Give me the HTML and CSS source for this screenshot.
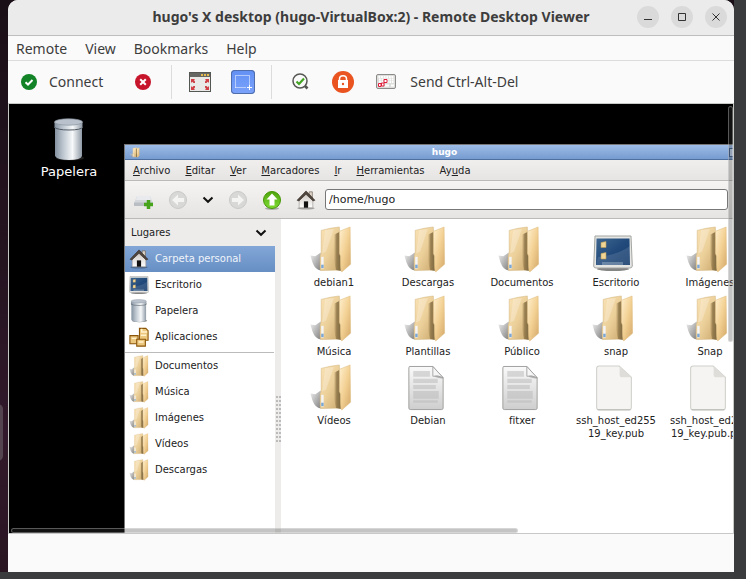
FILE: index.html
```html
<!DOCTYPE html>
<html lang="es">
<head>
<meta charset="utf-8">
<title>hugo's X desktop (hugo-VirtualBox:2) - Remote Desktop Viewer</title>
<link rel="stylesheet" href="styles.css">
</head>
<body>
<svg class="defs" aria-hidden="true">
  <defs>
    <linearGradient id="gFold" x1="0" y1="0" x2="1" y2="1"><stop offset="0" stop-color="#fbe3b6"/><stop offset=".5" stop-color="#ecd09a"/><stop offset="1" stop-color="#c9a76c"/></linearGradient>
    <linearGradient id="gFlap" x1="0" y1="0" x2="1" y2="1"><stop offset="0" stop-color="#fff0cf"/><stop offset=".5" stop-color="#f3d194"/><stop offset="1" stop-color="#d3a868"/></linearGradient>
    <linearGradient id="gGap" x1="0" y1="0" x2="1" y2="0"><stop offset="0" stop-color="#8f7543" stop-opacity="0"/><stop offset=".4" stop-color="#8a7145" stop-opacity=".8"/><stop offset="1" stop-color="#7d6941"/></linearGradient>
    <linearGradient id="gShade" x1="0" y1="0" x2="1" y2="1"><stop offset="0" stop-color="#eee"/><stop offset="1" stop-color="#6a6a6a"/></linearGradient>
    <linearGradient id="gCan" x1="0" y1="0" x2="1" y2="0"><stop offset="0" stop-color="#8491a0"/><stop offset=".25" stop-color="#b4bec9"/><stop offset=".65" stop-color="#f7f9fa"/><stop offset="1" stop-color="#8f9aa6"/></linearGradient>
    <linearGradient id="gBlue" x1="0" y1="0" x2="1" y2="1"><stop offset="0" stop-color="#3f668f"/><stop offset=".5" stop-color="#224b7c"/><stop offset="1" stop-color="#133a6b"/></linearGradient>
    <linearGradient id="gDoc" x1="0" y1="0" x2="0" y2="1"><stop offset="0" stop-color="#fafafa"/><stop offset="1" stop-color="#cecece"/></linearGradient>
    <linearGradient id="gGreen" x1="0" y1="0" x2="0" y2="1"><stop offset="0" stop-color="#4ea30d"/><stop offset="1" stop-color="#80dc33"/></linearGradient>
    <linearGradient id="gWall" x1="0" y1="0" x2="0" y2="1"><stop offset="0" stop-color="#c9c3bd"/><stop offset="1" stop-color="#fff"/></linearGradient>
  </defs>
  <symbol id="folder" viewBox="0 0 44 50">
    <path d="M1 31 6 32 11.500 28V46.500Q6 46 3 38Z" fill="url(#gShade)" opacity=".85"/>
    <path d="M12 5.500Q21 3 30.500 2L32 46 11.500 46.500Q10.500 46 11 31.500L12 28Z" fill="url(#gFold)" stroke="#d0b078" stroke-width=".5"/>
    <path d="M16 5 25 4 17 27 13 29Z" fill="#fff" opacity=".25"/>
    <path d="M25 10 31 7 32 47 27 46 25 36Z" fill="url(#gGap)"/>
    <path d="M30.500 6.500 41.500 2 42 40 33 48Q31.500 48 31.800 32L30.500 29Z" fill="url(#gFlap)" stroke="#dcb97c" stroke-width=".5"/>
    <path d="M12 32.500h2.500v12H12z" fill="#f5f5f5"/><path d="M12 40.500h2.500v3.500H12z" fill="#7da7d3"/>
  </symbol>
  <symbol id="trash" viewBox="0 0 32 44">
    <ellipse cx="17" cy="40" rx="14" ry="2.500" fill="#333" opacity=".6"/>
    <path d="M2 6V38Q4 42 16 42T29 38V6Z" fill="url(#gCan)"/>
    <path d="M1.500 4V10Q4 12.500 16 12.500T29.500 10V4Z" fill="url(#gCan)"/>
    <path d="M1 9Q4 12 16 12T30 9" fill="none" stroke="#515a64" stroke-width="1"/>
    <ellipse cx="15.500" cy="4" rx="14" ry="3.200" fill="#b9c2cc" stroke="#8995a1" stroke-width=".7"/>
  </symbol>
  <symbol id="desktop" viewBox="0 0 40 36">
    <ellipse cx="20" cy="34" rx="16" ry="2" fill="#333" opacity=".6"/>
    <path d="M2 1H38L39.300 31Q39 33 37 33H3Q.8 33 .7 31Z" fill="#e5e6e3" stroke="#a3a5a1"/>
    <path d="M3.500 3.500H36.500L37 30H3Z" fill="url(#gBlue)"/>
    <path d="M37 11Q25 20 5 22L3 30H37Z" fill="#fff" opacity=".12"/><path d="M9 27H30V30H9Z" fill="#fff" opacity=".25"/>
    <path d="M8 7.500 13 6.500V12.500H8ZM8 18.500 13 17.500V24H8Z" fill="#f0d594" stroke="#b59a58" stroke-width=".6"/>
  </symbol>
  <symbol id="home" viewBox="0 0 22 22">
    <ellipse cx="11" cy="20" rx="9.500" ry="1.500" opacity=".3"/>
    <path d="M14.500 2H18V9L14.500 5Z" fill="#ddd4c7" stroke="#675b4f" stroke-width=".7"/>
    <path d="M3.500 10 11 3 18.500 10V19.500H3.500Z" fill="url(#gWall)" stroke="#9a9590" stroke-width=".7"/>
    <path d="M11 1 1.200 11.300 3.200 12 11 4.700 18.800 12 20.800 11.300Z" fill="#50463e" stroke="#332b25" stroke-width=".7"/>
    <path d="M8.700 12.500H13.300V19.500H8.700Z" fill="#111"/>
  </symbol>
  <symbol id="apps" viewBox="0 0 22 22">
    <g fill="#ecc77e" stroke="#8a5509" stroke-width="1.200"><path d="M11.500 1.500H18.500L21 4V14.500H11.500Z"/><path d="M1 9.500H10V18.500H1Z"/><path d="M8.500 13.500H18V21H8.500Z"/></g>
    <path d="M14 2V5.500H20M3 12.500H8M10.500 16.500H16M13 9H19" fill="none" stroke="#fff2cd" stroke-width="1.600"/>
  </symbol>
  <symbol id="textdoc" viewBox="0 0 38 48">
    <path d="M2 1.500H26L36.500 13V44Q36.500 45.500 35 45.500H3Q1.500 45.500 1.500 44V3Z" fill="url(#gDoc)" stroke="#a0a19e"/>
    <path d="M6 6H23V12H6ZM6 14H31V18.500H6ZM6 20.500H29V24.500H6ZM6 26.500H32V34.500H6ZM6 36H31V38.500H6Z" fill="#b7b7b7" opacity=".5"/>
    <path d="M26 1.500V9Q26 13 36.500 14Z" fill="#888" opacity=".6"/><path d="M26 1.500V11.500Q31 10 36.500 13Z" fill="#f6f6f6" stroke="#999" stroke-width=".8"/>
  </symbol>
  <symbol id="blankdoc" viewBox="0 0 36 46">
    <path d="M3.500 1H23L35 12V41Q35 44 32.500 44H3.500Q1 44 1 41V3.500Q1 1 3.500 1Z" fill="#f5f4f2" stroke="#cfcfcb"/>
    <path d="M23.500 1 35 12H26Q23.500 12 23.500 9.500Z" fill="#deddda"/><path d="M2 43.800H34" stroke="#b7b7b3"/>
  </symbol>
  <symbol id="chevron" viewBox="0 0 12 8"><path d="M1.500 1.500 6 5.800 10.500 1.500" fill="none" stroke="#111" stroke-width="2"/></symbol>
</svg>

<main class="viewer">
  <header class="titlebar">
    <h1>hugo's X desktop (hugo-VirtualBox:2) - Remote Desktop Viewer</h1>
    <div class="window-controls">
      <button type="button" aria-label="Minimize"><svg viewBox="0 0 22 22"><path d="M7 13.500H15" /></svg></button>
      <button type="button" aria-label="Maximize"><svg viewBox="0 0 22 22"><path d="M7.500 7.500H14.500V14.500H7.500Z" /></svg></button>
      <button type="button" aria-label="Close"><svg viewBox="0 0 22 22"><path d="M7.500 7.500 14.500 14.500M14.500 7.500 7.500 14.500" /></svg></button>
    </div>
  </header>
  <nav class="menubar">
    <button type="button">Remote</button><button type="button">View</button><button type="button">Bookmarks</button><button type="button">Help</button>
  </nav>
  <div class="toolbar">
    <button type="button" class="connect"><svg width="16" height="16" viewBox="0 0 16 16"><circle cx="8" cy="8" r="8" fill="#128327"/><path d="M4.500 8.200 7 10.500 11.500 6" fill="none" stroke="#fff" stroke-width="2"/></svg>Connect</button>
    <button type="button" aria-label="Disconnect"><svg width="16" height="16" viewBox="0 0 16 16"><circle cx="8" cy="8" r="8" fill="#c7162b"/><path d="M5.200 5.200 10.800 10.800M10.800 5.200 5.200 10.800" stroke="#fff" stroke-width="2"/></svg></button>
    <span class="divider"></span>
    <button type="button" aria-label="Fullscreen"><svg width="22" height="20" viewBox="0 0 22 20"><rect x=".5" y=".5" width="21" height="19" fill="#e9e9e7" stroke="#555753"/><path d="M1 1H21V5H1Z" fill="#666762"/><path d="M12 2h2v2h-2zM15 2h2v2h-2zM18 2h2v2h-2z" fill="#e4b94e"/><g fill="#cf3f45"><path d="M2 7h4L5 8.200 6 9.500V11H4.500L3.200 9.800 2 11zM20 7h-4l1 1.200L16 9.500V11h1.500l1.300-1.200L20 11zM2 18h4l-1-1.200L6 15.500V14H4.500l-1.300 1.200L2 14zM20 18h-4l1-1.200L16 15.500V14h1.500l1.300 1.200L20 14z"/></g></svg></button>
    <button type="button" class="scaling" aria-label="Scaling" aria-pressed="true"><svg width="24" height="24" viewBox="0 0 24 24"><path d="M4.500 17.500V5.500H18.500V15M4.500 17.500H15" fill="none" stroke="#fff" stroke-width="1" stroke-dasharray="1 1"/><path d="M18.500 15V20M16 17.500H21" stroke="#fff"/></svg></button>
    <span class="divider"></span>
    <button type="button" class="view-only" aria-label="View only"><svg width="17" height="17" viewBox="0 0 17 17"><path d="M13 13 15.500 15.500" stroke="#555753" stroke-width="2.600"/><circle cx="8" cy="8" r="7" fill="#fafafa" stroke="#555753" stroke-width="1.500"/><path d="M4.500 8.500 7 11 12 5.500" fill="none" stroke="#44a524" stroke-width="2.200"/></svg></button>
    <button type="button" aria-label="Lock"><svg width="22" height="22" viewBox="0 0 22 22"><circle cx="11" cy="11" r="11" fill="#e95420"/><path d="M7.500 9V8Q7.500 4.800 11 4.800T14.500 8V9" fill="none" stroke="#fff" stroke-width="1.500"/><path d="M6 9H16V17H6Z" fill="#fff"/><circle cx="11" cy="13" r="1.200" fill="#e95420"/></svg></button>
    <button type="button" class="send"><svg width="20" height="15" viewBox="0 0 20 15"><rect x=".5" y=".5" width="19" height="14" rx="1.500" fill="#dededc" stroke="#8b8c89"/><path d="M2.500 3H17.500M3 5.500H17.500M3 8H17.500" stroke="#fff" stroke-width="1.800" stroke-dasharray="1.800 .8"/><path d="M9 11.500H13M15 11.500H18" stroke="#fff" stroke-width="2"/><path d="M8 5.500H11V8.500H8ZM5.500 9H8V12H5.500ZM2.500 9.500H5V12.500H2.500Z" fill="#fff" stroke="#df1c3a"/></svg>Send Ctrl-Alt-Del</button>
  </div>

  <section class="screen">
    <figure class="desk-icon"><svg width="32" height="44"><use href="#trash"/></svg><figcaption>Papelera</figcaption></figure>

    <div class="fm">
      <div class="fm-title"><svg class="fm-logo" width="10" height="11"><use href="#folder"/></svg><h2>hugo</h2><span class="fm-button"></span></div>
      <nav class="fm-menu">
        <button type="button"><u>A</u>rchivo</button><button type="button"><u>E</u>ditar</button><button type="button"><u>V</u>er</button><button type="button"><u>M</u>arcadores</button><button type="button"><u>I</u>r</button><button type="button"><u>H</u>erramientas</button><button type="button">Ay<u>u</u>da</button>
      </nav>
      <div class="fm-tools">
        <button type="button" aria-label="Nueva ventana"><svg width="20" height="20" viewBox="0 0 20 20"><path d="M3 6H16L19 13H0Z" fill="#d4d8dd"/><path d="M0 12.500H19V16H0Z" fill="#b9bdc4"/><path d="M3 6H16L17 10H2Z" fill="#e8eaed"/><path d="M14.500 10V19M10 14.500H19" stroke="#48a31c" stroke-width="3.500"/></svg></button>
        <button type="button" aria-label="Atrás"><svg width="20" height="20" viewBox="0 0 20 20"><circle cx="10" cy="10" r="8.500" fill="#d8d9d6" stroke="#c8c9c6"/><path d="M4 10 10 4.500V8H16V12H10V15.500Z" fill="#f4f4f2"/></svg></button>
        <button type="button" aria-label="Historial"><svg width="12" height="8"><use href="#chevron"/></svg></button>
        <button type="button" aria-label="Adelante"><svg width="20" height="20" viewBox="0 0 20 20"><circle cx="10" cy="10" r="8.500" fill="#d8d9d6" stroke="#c8c9c6"/><path d="M16 10 10 4.500V8H4V12H10V15.500Z" fill="#f4f4f2"/></svg></button>
        <button type="button" aria-label="Subir"><svg width="20" height="20" viewBox="0 0 20 20"><ellipse cx="10" cy="18.500" rx="7" ry="1.500" fill="#aaa"/><circle cx="10" cy="10" r="8.500" fill="url(#gGreen)" stroke="#479706"/><path d="M10 3.500 15.500 9.500H12.500V15.500H7.500V9.500H4.500Z" fill="#fff"/></svg></button>
        <button type="button" aria-label="Carpeta personal"><svg width="20" height="20"><use href="#home"/></svg></button>
        <input type="text" aria-label="Ubicación" value="/home/hugo">
      </div>
      <div class="fm-body">
        <aside class="places">
          <button type="button" class="places-head">Lugares<svg width="12" height="8"><use href="#chevron"/></svg></button>
          <ul>
            <li class="current"><svg><use href="#home"/></svg>Carpeta personal</li>
            <li><svg><use href="#desktop"/></svg>Escritorio</li>
            <li><svg><use href="#trash"/></svg>Papelera</li>
            <li><svg><use href="#apps"/></svg>Aplicaciones</li>
          </ul>
          <ul class="bookmarks">
            <li><svg><use href="#folder"/></svg>Documentos</li>
            <li><svg><use href="#folder"/></svg>Música</li>
            <li><svg><use href="#folder"/></svg>Imágenes</li>
            <li><svg><use href="#folder"/></svg>Vídeos</li>
            <li><svg><use href="#folder"/></svg>Descargas</li>
          </ul>
        </aside>
        <div class="splitter"><span></span></div>
        <ul class="files">
          <li><svg><use href="#folder"/></svg><span>debian1</span></li>
          <li><svg><use href="#folder"/></svg><span>Descargas</span></li>
          <li><svg><use href="#folder"/></svg><span>Documentos</span></li>
          <li class="wide"><svg><use href="#desktop"/></svg><span>Escritorio</span></li>
          <li><svg><use href="#folder"/></svg><span>Imágenes</span></li>
          <li><svg><use href="#folder"/></svg><span>Música</span></li>
          <li><svg><use href="#folder"/></svg><span>Plantillas</span></li>
          <li><svg><use href="#folder"/></svg><span>Público</span></li>
          <li><svg><use href="#folder"/></svg><span>snap</span></li>
          <li><svg><use href="#folder"/></svg><span>Snap</span></li>
          <li><svg><use href="#folder"/></svg><span>Vídeos</span></li>
          <li class="doc"><svg><use href="#textdoc"/></svg><span>Debian</span></li>
          <li class="doc"><svg><use href="#textdoc"/></svg><span>fitxer</span></li>
          <li class="doc"><svg><use href="#blankdoc"/></svg><span>ssh_host_ed25519_key.pub</span></li>
          <li class="doc"><svg><use href="#blankdoc"/></svg><span>ssh_host_ed25519_key.pub.pub</span></li>
        </ul>
      </div>
    </div>
    <span class="scroll vertical"></span>
    <span class="scroll horizontal"></span>
  </section>
  <footer class="statusbar"></footer>
</main>
<span class="dock"></span>
</body>
</html>
```
FILE: styles.css
```css
* { box-sizing: border-box; }
body {
  margin: 0;
  height: 100vh;
  padding: 0 12px 7px 8px;
  overflow: hidden;
  background: linear-gradient(#3a3b3d, #3a3b3d) right / 12px 100% no-repeat,
    linear-gradient(#3b3c3e, #3b3c3e) bottom / 100% 7px no-repeat,
    linear-gradient(#1b0f17, #241420 45%, #32192b 75%, #291522);
  font-family: "Noto Sans", "Open Sans", sans-serif;
  font-size: 14px;
  color: #3d3d3d;
}
button { border: 0; padding: 0; margin: 0; background: none; font: inherit; color: inherit; }
h1, h2, ul, figure { margin: 0; padding: 0; }
ul { list-style: none; }
svg { display: block; flex: none; }
.defs { position: absolute; width: 0; height: 0; }

.viewer {
  height: 100%;
  display: flex;
  flex-direction: column;
  overflow: hidden;
  background: #fafafa;
  border-radius: 10px 10px 0 0;
}
.titlebar {
  flex: none;
  height: 36px;
  display: grid;
  grid-template-columns: 1fr auto 1fr;
  align-items: center;
  padding-bottom: 1px;
  background: #ebebeb;
  border-bottom: 1px solid #bdbdbd;
}
.titlebar h1 { grid-column: 2; font-size: 14px; line-height: 20px; white-space: nowrap; }
.window-controls { display: flex; justify-content: flex-end; gap: 12px; padding-right: 7px; }
.window-controls button { width: 22px; height: 22px; border-radius: 50%; background: #dadada; }
.window-controls path { fill: none; stroke: #333; stroke-width: 1; }

.menubar {
  flex: none;
  height: 25px;
  display: flex;
  align-items: center;
  gap: 18px;
  padding: 0 8px;
  border-bottom: 1px solid #dcdcdc;
}
.toolbar {
  flex: none;
  height: 42px;
  display: flex;
  align-items: center;
  gap: 20px;
  padding: 0 13px 1px;
}
.toolbar button { display: flex; align-items: center; gap: 12px; white-space: nowrap; }
.toolbar .connect { padding-right: 12px; }
.toolbar .scaling { border-radius: 4px; background: linear-gradient(#6190f4, #7ca3fb); box-shadow: inset 0 0 0 1px #4f6cab; }
.toolbar .view-only { padding-right: 3px; }
.toolbar .send { gap: 14px; padding-left: 2px; }
.divider { width: 1px; height: 34px; margin-right: -3px; background: #dcdcdc; }
.scaling + .divider { margin: 0 0 0 -4px; }

.screen {
  flex: 1;
  position: relative;
  overflow: hidden;
  background: #000;
  border: 1px solid #c6c9c6;
  font-family: "DejaVu Sans", sans-serif;
  font-size: 10px;
  color: #222;
}
.statusbar { flex: none; height: 38px; }
.desk-icon {
  position: absolute;
  left: 30px;
  top: 14px;
  width: 60px;
  display: flex;
  flex-direction: column;
  align-items: center;
  gap: 2px;
  font-size: 13px;
  line-height: 16px;
  color: #fff;
}

/* The file manager is wider and taller than the visible part of the remote screen. */
.fm {
  position: absolute;
  left: 115px;
  right: -32px;
  top: 40px;
  bottom: -10px;
  display: flex;
  flex-direction: column;
  background: #edeceb;
  border: 1px solid #777;
}
.fm-title {
  flex: none;
  height: 15px;
  display: grid;
  grid-template-columns: 1fr auto 1fr;
  align-items: center;
  padding: 0 5px;
  background: linear-gradient(#9dbde8, #769bcf);
  border-bottom: 1px solid #4f6f9f;
  color: #fff;
}
.fm-title h2 { font-size: 9px; line-height: 12px; }
.fm-button { justify-self: end; width: 9px; height: 9px; margin-right: 21px; border: 1px solid #3c5d8c; background: #b9cfec; }
.fm-menu {
  flex: none;
  height: 21px;
  display: flex;
  align-items: center;
  gap: 15px;
  padding: 0 8px;
  background: linear-gradient(#f0efee, #e6e5e4);
  border-bottom: 1px solid #bcbab8;
}
.fm-tools {
  flex: none;
  height: 38px;
  display: flex;
  align-items: center;
  gap: 14px;
  padding: 0 36px 0 9px;
  background: linear-gradient(#f5f4f3, #e5e4e2);
  border-bottom: 1px solid #bcbab8;
}
.fm-tools input {
  flex: 1;
  min-width: 0;
  height: 21px;
  margin-left: -5px;
  padding: 0 3px;
  border: 1px solid #777;
  border-radius: 3px;
  background: #fff;
  font: inherit;
  font-size: 11px;
  color: inherit;
}
.fm-body { flex: 1; min-height: 0; display: flex; }
.places { width: 150px; flex: none; display: flex; flex-direction: column; background: #fff; }
.places-head {
  flex: none;
  height: 27px;
  display: flex;
  align-items: center;
  justify-content: space-between;
  padding: 0 8px 0 6px;
  background: #edeceb;
}
.places li { height: 26px; display: flex; align-items: center; gap: 6px; padding: 0 0 1px 4px; }
.places li svg { width: 20px; height: 24px; }
.places .current { background: linear-gradient(#82a6d7, #678fc4); color: #f0f4fa; }
.bookmarks { margin: 2px 1px 0 0; border-top: 1px solid #bbb; }
.splitter { width: 6px; flex: none; display: flex; align-items: center; justify-content: center; }
.splitter span {
  width: 5px;
  height: 48px;
  margin-top: 78px;
  background: radial-gradient(circle at 1px 1px, #bbb 0 1px, transparent 1px) 0 0 / 3px 4px;
}
.files {
  flex: 1;
  display: grid;
  grid-template-columns: repeat(auto-fill, 94px);
  grid-auto-rows: 69px;
  align-content: start;
  padding: 6px 0 0 6px;
  background: #fff;
}
.files li { display: flex; flex-direction: column; align-items: center; gap: 2px; }
.files svg { width: 44px; height: 49px; margin-right: 6px; }
.files .wide svg { width: 40px; height: 36px; margin: 10px 6px 3px 0; }
.files .doc svg { width: 38px; height: 47px; margin: 2px 4px 0 0; }
.files span { width: 86px; line-height: 13px; text-align: center; word-break: break-all; }

.scroll { position: absolute; background: rgba(60, 60, 60, .3); border: 1px solid rgba(255, 255, 255, .3); border-radius: 3px; }
.vertical { top: 2px; right: 0; width: 5px; height: 55%; }
.horizontal { left: 2px; bottom: 0; width: 70%; height: 5px; }
.dock { position: absolute; left: -8px; top: 404px; width: 11px; height: 57px; border-radius: 5px; background: #54444f; }
```
